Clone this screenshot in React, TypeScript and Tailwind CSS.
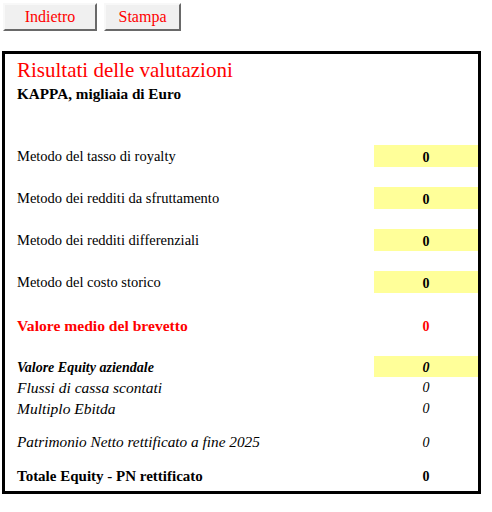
import React from "react";

type Row = {
  label: string;
  value: string;
  top: string;
};

const methods: Row[] = [
  { label: "Metodo del tasso di royalty", value: "0", top: "mt-[0px]" },
  { label: "Metodo dei redditi da sfruttamento", value: "0", top: "mt-[20px]" },
  { label: "Metodo dei redditi differenziali", value: "0", top: "mt-[20px]" },
  { label: "Metodo del costo storico", value: "0", top: "mt-[20px]" },
];

function Btn({ children, w }: { children: React.ReactNode; w: string }) {
  return (
    <button
      className={`${w} h-[28px] bg-[#f0f0f0] text-[#ff0000] text-[16px] border-2 border-t-[#f8f8f8] border-l-[#f8f8f8] border-r-[#696969] border-b-[#696969] leading-none font-[family-name:'Liberation_Serif',serif]`}
    >
      {children}
    </button>
  );
}

export default function App() {
  return (
    <div className="w-[492px] h-[512px] bg-white text-black font-[family-name:'Liberation_Serif',serif]">
      <div className="flex gap-[7px] pl-[3px] pt-[3px]">
        <Btn w="w-[94px]">Indietro</Btn>
        <Btn w="w-[77px]">Stampa</Btn>
      </div>

      <div className="ml-[2px] mt-[20px] w-[479px] h-[443px] border-[3px] border-black">
        <div className="pl-[12px] pt-[4px]">
          <div className="text-[21px] leading-[25px] text-[#ff0000]">Risultati delle valutazioni</div>
          <div className="text-[15.2px] leading-[18px] font-bold mt-[2px]">KAPPA, migliaia di Euro</div>
        </div>

        <div className="mt-[42px] flex flex-col">
          {methods.map((r) => (
            <div key={r.label} className={`flex h-[22px] items-center ${r.top}`}>
              <div className="flex-1 pl-[12px] pt-[2px] text-[14.5px]">{r.label}</div>
              <div className="w-[104px] h-full bg-[#ffff99] flex items-center justify-center pt-[2px] font-bold text-[14px]">
                {r.value}
              </div>
            </div>
          ))}

          <div className="flex h-[22px] items-center mt-[21px] pt-[2px] text-[#ff0000] font-bold">
            <div className="flex-1 pl-[12px] text-[15.6px]">Valore medio del brevetto</div>
            <div className="w-[104px] text-center text-[14px]">0</div>
          </div>

          <div className="flex h-[21px] items-center mt-[20px] italic">
            <div className="flex-1 pl-[12px] pt-[1px] font-bold text-[14px]">Valore Equity aziendale</div>
            <div className="w-[104px] h-full bg-[#ffff99] flex items-center justify-center pt-[1px] font-bold text-[14px]">0</div>
          </div>
          <div className="flex h-[21px] items-center italic text-[15.5px]">
            <div className="flex-1 pl-[12px]">Flussi di cassa scontati</div>
            <div className="w-[104px] text-center text-[14px]">0</div>
          </div>
          <div className="flex h-[21px] items-center italic text-[15.5px]">
            <div className="flex-1 pl-[12px]">Multiplo Ebitda</div>
            <div className="w-[104px] text-center text-[14px]">0</div>
          </div>

          <div className="flex h-[22px] items-center mt-[11px] pt-[2px] italic text-[15.3px]">
            <div className="flex-1 pl-[12px]">Patrimonio Netto rettificato a fine 2025</div>
            <div className="w-[104px] text-center text-[14px]">0</div>
          </div>

          <div className="flex h-[22px] items-center mt-[12px] pt-[2px] font-bold">
            <div className="flex-1 pl-[12px] text-[15px]">Totale Equity - PN rettificato</div>
            <div className="w-[104px] text-center text-[14px]">0</div>
          </div>
        </div>
      </div>
    </div>
  );
}
